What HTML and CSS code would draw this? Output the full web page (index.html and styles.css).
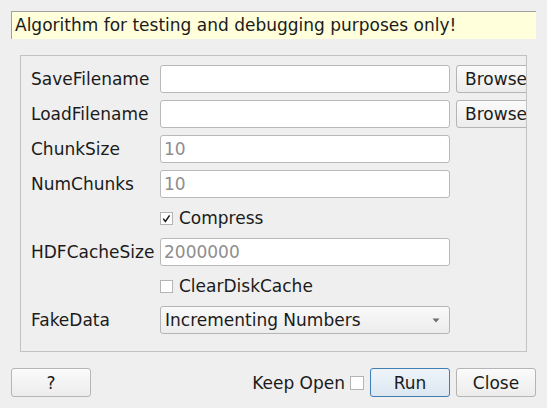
FILE: index.html
```html
<!DOCTYPE html>
<html>
<head>
<meta charset="utf-8">
<link rel="stylesheet" href="styles.css">
</head>
<body>
<div class="dialog">
  <div class="banner">Algorithm for testing and debugging purposes only!</div>
  <div class="group">
    <div class="form">
      <div class="label">SaveFilename</div>
      <div class="input"></div>
      <div class="button browse">Browse</div>

      <div class="label">LoadFilename</div>
      <div class="input"></div>
      <div class="button browse">Browse</div>

      <div class="label">ChunkSize</div>
      <div class="input placeholder">10</div>
      <div class="empty"></div>

      <div class="label">NumChunks</div>
      <div class="input placeholder">10</div>
      <div class="empty"></div>

      <div class="label"></div>
      <div class="check-row"><span class="box"><svg width="13" height="13" viewBox="0 0 13 13"><polyline points="3.2,6.6 5.4,9.4 9.6,3.4" fill="none" stroke="#1a1a1a" stroke-width="1.5"/></svg></span>Compress</div>
      <div class="empty"></div>

      <div class="label">HDFCacheSize</div>
      <div class="input placeholder">2000000</div>
      <div class="empty"></div>

      <div class="label"></div>
      <div class="check-row"><span class="box"></span>ClearDiskCache</div>
      <div class="empty"></div>

      <div class="label">FakeData</div>
      <div class="combo"><span>Incrementing Numbers</span><svg class="arrow" width="8" height="5" viewBox="0 0 8 5"><polygon points="0.5,0.5 7.5,0.5 4,4.5" fill="#6e6e6e"/></svg></div>
      <div class="empty"></div>
    </div>
  </div>
  <div class="footer">
    <div class="button help">?</div>
    <div class="spacer"></div>
    <div class="keep">Keep Open</div>
    <span class="box keepbox"></span>
    <div class="button run">Run</div>
    <div class="button close">Close</div>
  </div>
</div>
</body>
</html>
```
FILE: styles.css
```css
html, body {
  margin: 0;
  padding: 0;
  background: #efefef;
}
body {
  font-family: "DejaVu Sans", sans-serif;
  font-size: 17px;
  color: #1b1b1b;
  width: 547px;
  height: 408px;
  overflow: hidden;
}
.dialog {
  padding: 11px 11px 11px 11px;
  display: flex;
  flex-direction: column;
}
.banner {
  height: 28px;
  box-sizing: border-box;
  background: #ffffdc;
  border-top: 1px solid #a0a0a0;
  border-left: 1px solid #a0a0a0;
  padding-left: 3px;
  line-height: 26px;
  white-space: nowrap;
}
.group {
  margin: 16px 9px 0 9px;
  height: 297px;
  box-sizing: border-box;
  border: 1px solid #c2c2c2;
  overflow: hidden;
  padding: 9px 0 0 10px;
}
.form {
  display: grid;
  grid-template-columns: 123px 290px 80px;
  grid-template-rows: 28px 28px 28px 28px 26px 28px 26px 28px;
  column-gap: 6px;
  row-gap: 7px;
  width: 600px;
}
.label {
  display: flex;
  align-items: center;
  white-space: nowrap;
}
.input {
  background: #ffffff;
  border: 1px solid #b9b9b9;
  border-radius: 3px;
  box-sizing: border-box;
  padding-left: 3px;
  display: flex;
  align-items: center;
}
.placeholder {
  color: #8e8e8e;
}
.button {
  box-sizing: border-box;
  border: 1px solid #b5b5b5;
  border-radius: 3px;
  background: linear-gradient(#fbfbfb, #ececec);
  display: flex;
  align-items: center;
  justify-content: center;
  white-space: nowrap;
}
.check-row {
  display: flex;
  align-items: center;
  white-space: nowrap;
}
.box {
  display: inline-block;
  width: 13px;
  height: 13px;
  box-sizing: border-box;
  border: 1px solid #b4b4b4;
  background: #ffffff;
  margin-right: 6px;
  position: relative;
}
.box svg {
  position: absolute;
  left: -1px;
  top: -1px;
}
.combo {
  box-sizing: border-box;
  border: 1px solid #b5b5b5;
  border-radius: 3px;
  background: linear-gradient(#f9f9f9, #ececec);
  display: flex;
  align-items: center;
  justify-content: space-between;
  padding: 0 9px 0 4px;
}
.arrow {
  display: block;
}
.footer {
  margin-top: 16px;
  height: 29px;
  display: flex;
  align-items: stretch;
}
.footer .button {
  width: 80px;
}
.spacer {
  flex: 1;
}
.keep {
  display: flex;
  align-items: center;
  margin-right: 5px;
}
.keepbox {
  align-self: center;
  width: 14px;
  height: 14px;
  margin-right: 6px;
}
.run {
  border-color: #3f7db3;
  background: linear-gradient(#eef4fa, #dce7f1);
  margin-right: 6px;
}
```
